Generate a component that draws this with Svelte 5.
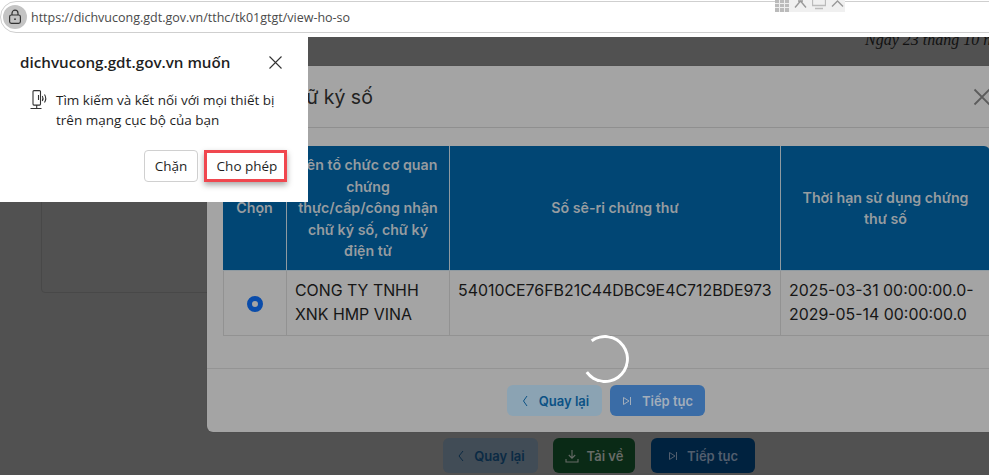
<script>
  let rows = [
    { org: ["CONG TY TNHH", "XNK HMP VINA"], serial: "54010CE76FB21C44DBC9E4C712BDE973", valid: ["2025-03-31 00:00:00.0-", "2029-05-14 00:00:00.0"] }
  ];
</script>

<div class="screen">
  <header class="browser">
    <div class="address">
      <span class="lock">
        <svg width="16" height="16" viewBox="0 0 16 16" fill="none" stroke="#333" stroke-width="1.2">
          <rect x="2.600" y="6" width="10.800" height="8.400" rx="1.800" />
          <path d="M5 6V4.200a3 3 0 0 1 6 0V6" />
          <circle cx="8" cy="10.200" r="0.900" fill="#333" stroke="none" />
        </svg>
      </span>
      <span class="url">https://dichvucong.gdt.gov.vn/tthc/tk01gtgt/view-ho-so</span>
    </div>
    <div class="tray">
      <svg width="14" height="12" viewBox="0 0 14 12"><path d="M0 0h14v12H0z" fill="#bbb" /><path d="M0 3.500h14M0 7.500h14M4.500 0v12M9.500 0v12" stroke="#eee" /></svg>
      <svg width="13" height="8" viewBox="0 0 13 8" fill="none" stroke="#999" stroke-width="1.400"><path d="M1 7.500 6.500 1l5.500 6.500M4 1h5" /></svg>
      <svg width="14" height="10" viewBox="0 0 14 10" fill="none" stroke="#bbb" stroke-width="1.300"><path d="M0.500 0v5.500h13V0M3 8.500h8" /></svg>
      <svg width="13" height="7" viewBox="0 0 13 7" fill="none" stroke="#999" stroke-width="1.400"><path d="M1 6.500 6.500 1l5.500 5.500" /></svg>
    </div>
  </header>

  <main class="page">
    <p class="date">Ngày 23 tháng 10 năm 2025</p>
    <div class="ghost-card"></div>
    <div class="page-actions">
      <button class="pbtn back"><svg width="10" height="12" viewBox="0 0 10 12" fill="none" stroke="currentColor"><path d="M7 1 3 6l4 5" /></svg>Quay lại</button>
      <button class="pbtn save">
        <svg width="14" height="14" viewBox="0 0 14 14" fill="none" stroke="currentColor" stroke-width="1.100"><path d="M7 1v8M3.800 6 7 9.200 10.200 6M1 10v3h12v-3" /></svg>
        Tải về
      </button>
      <button class="pbtn next"><svg width="11" height="10" viewBox="0 0 11 10" fill="none" stroke="currentColor"><path d="M1.500 1.500v7L7 5zM8.500 1v8" /></svg>Tiếp tục</button>
    </div>
  </main>

  <section class="modal">
    <div class="modal-head">
      <h2>Chọn chữ ký số</h2>
      <svg class="modal-x" width="18" height="18" viewBox="0 0 18 18" stroke="#5c5c5c" stroke-width="1.800"><path d="M1.500 1.500l15 15M16.500 1.500l-15 15" /></svg>
    </div>
    <div class="modal-body">
      <table>
        <thead>
          <tr>
            <th class="c1">Chọn</th>
            <th class="c2">Tên tổ chức cơ quan<br />chứng<br />thực/cấp/công nhận<br />chữ ký số, chữ ký<br />điện tử</th>
            <th class="c3">Số sê-ri chứng thư</th>
            <th class="c4">Thời hạn sử dụng chứng thư số</th>
          </tr>
        </thead>
        <tbody>
          {#each rows as row}
            <tr>
              <td class="radio-cell"><span class="radio"></span></td>
              <td>{row.org[0]}<br />{row.org[1]}</td>
              <td class="serial">{row.serial}</td>
              <td>{row.valid[0]}<br />{row.valid[1]}</td>
            </tr>
          {/each}
        </tbody>
      </table>
    </div>
    <div class="modal-foot">
      <button class="mbtn light"><svg width="10" height="12" viewBox="0 0 10 12" fill="none" stroke="currentColor"><path d="M7 1 3.500 6 7 11" /></svg>Quay lại</button>
      <button class="mbtn blue"><svg width="11" height="10" viewBox="0 0 11 10" fill="none" stroke="currentColor"><path d="M1.500 1.500v7L7 5zM8.500 1v8" /></svg>Tiếp tục</button>
    </div>
  </section>

  <div class="spinner"></div>

  <aside class="prompt">
    <div class="prompt-title">
      <strong>dichvucong.gdt.gov.vn muốn</strong>
      <svg width="13" height="13" viewBox="0 0 13 13" stroke="#333" stroke-width="1.100"><path d="M.5.5l12 12M12.500.5l-12 12" /></svg>
    </div>
    <div class="prompt-line">
      <svg width="18" height="20" viewBox="0 0 18 20" fill="none" stroke="#333" stroke-width="1.100">
        <rect x="3" y="0.600" width="7.500" height="14.500" rx="1" />
        <path d="M0.500 18.500h11M6.700 15.100v3.400M8.500 5v5" />
        <path d="M12.300 6q1.500 2.500 0 5M14.500 4.500q2.500 4 0 8" />
      </svg>
      <span>Tìm kiếm và kết nối với mọi thiết bị<br />trên mạng cục bộ của bạn</span>
    </div>
    <div class="prompt-actions">
      <button class="deny">Chặn</button>
      <button class="allow">Cho phép</button>
    </div>
  </aside>
</div>

<style>
  :global(body) {
    margin: 0;
    background: #515151;
  }

  .screen {
    position: relative;
    width: 989px;
    height: 475px;
    overflow: hidden;
    display: flex;
    flex-direction: column;
    font-family: Inter, "Liberation Sans", sans-serif;
    background: #515151;
  }

  button {
    font-family: inherit;
    border: none;
  }

  .browser {
    position: relative;
    height: 37px;
    box-sizing: border-box;
    flex: none;
    background: #fff;
    padding-top: 1px;
    overflow: hidden;
  }

  .address {
    display: flex;
    align-items: center;
    gap: 4px;
    height: 32px;
    width: 1010px;
    box-sizing: border-box;
    border: 1px solid #cfcfcf;
    border-radius: 16px;
    padding-left: 2px;
  }

  .lock {
    width: 24px;
    height: 24px;
    border-radius: 50%;
    background: #c4c4c4;
    display: flex;
    align-items: center;
    justify-content: center;
  }

  .url {
    font: 12.500px "Open Sans", sans-serif;
    color: #4a4a4a;
  }

  .tray {
    position: absolute;
    top: 0;
    left: 775px;
    width: 70px;
    height: 12px;
    overflow: hidden;
    background: #f0f0f0;
    display: flex;
    align-items: flex-start;
    gap: 5px;
  }

  .page {
    position: relative;
    flex: 1;
    overflow: hidden;
    background: #515151;
  }

  .date {
    margin: 0;
    position: absolute;
    top: -6px;
    left: 865px;
    white-space: nowrap;
    font: italic 16px "Liberation Serif", serif;
    color: #111;
  }

  .ghost-card {
    position: absolute;
    left: 41px;
    top: -20px;
    width: 960px;
    height: 276px;
    border: 1px solid #484848;
    border-radius: 4px;
    box-sizing: border-box;
  }

  .page-actions {
    position: absolute;
    left: 443px;
    top: 401px;
    display: flex;
    gap: 15px;
  }

  .pbtn {
    height: 35px;
    border-radius: 6px;
    display: flex;
    align-items: center;
    justify-content: center;
    gap: 8px;
    font-size: 13px;
    font-weight: 600;
    box-sizing: border-box;
  }

  .pbtn.back { width: 95px; background: #414c56; color: #0b2a44; }
  .pbtn.save { width: 82px; background: #0a2a16; color: #666b67; }
  .pbtn.next { width: 104px; background: #00223f; color: #525e6e; margin-left: 1px; }

  .modal {
    position: absolute;
    left: 207px;
    top: 66px;
    width: 800px;
    height: 366px;
    display: flex;
    flex-direction: column;
    background: #a4a4a4;
    border-radius: 6px;
    box-shadow: 0 0 1px #444;
  }

  .modal-head {
    height: 62px;
    flex: none;
    box-sizing: border-box;
    border-bottom: 1px solid #8f8f8f;
    display: flex;
    align-items: center;
    padding-left: 22px;
    position: relative;
  }

  .modal-head h2 {
    margin: 0;
    font-size: 19.500px;
    font-weight: 400;
    color: #222;
  }

  .modal-x {
    position: absolute;
    left: 766px;
    top: 22px;
  }

  .modal-body {
    flex: 1;
    padding: 18px 0 0 16px;
  }

  table {
    width: 767px;
    table-layout: fixed;
    border-collapse: separate;
    border-spacing: 0;
    font-size: 15.900px;
    color: #161616;
  }

  th {
    height: 125px;
    box-sizing: border-box;
    padding: 0 8px;
    background: #014674;
    color: #969ca0;
    font-size: 14.200px;
    line-height: 21.500px;
    font-weight: 600;
    border-right: 1px solid #8f9aa1;
    border-bottom: 1px solid #8f9aa1;
  }

  th:first-child { border-top-left-radius: 6px; }
  th:last-child { border-top-right-radius: 6px; border-right: none; }

  .c1 { width: 64px; padding: 0; }
  .c2 { width: 163px; padding: 0; }
  .c3 { width: 331px; }
  .c4 { padding: 0 16px; }

  td {
    height: 65px;
    box-sizing: border-box;
    padding: 0 8px;
    line-height: 24px;
    border-right: 1px solid #929292;
    border-bottom: 1px solid #929292;
    white-space: nowrap;
  }

  td:first-child { border-left: 1px solid #929292; }
  td:last-child { border-right: none; }
  td.serial { vertical-align: top; padding-top: 8px; }
  td.radio-cell { text-align: center; padding: 0; }

  .radio {
    display: inline-block;
    width: 16px;
    height: 16px;
    box-sizing: border-box;
    border: 5px solid #0a4caa;
    border-radius: 50%;
    background: #a4a4a4;
    vertical-align: middle;
  }

  .modal-foot {
    height: 64px;
    flex: none;
    box-sizing: border-box;
    border-top: 1px solid #949494;
    padding: 16px 0 0 300px;
    display: flex;
    gap: 8px;
  }

  .mbtn {
    width: 95px;
    height: 31px;
    border-radius: 6px;
    display: flex;
    align-items: center;
    justify-content: center;
    gap: 9px;
    font-size: 13px;
    font-weight: 600;
  }

  .mbtn.light { background: #8ba3b3; color: #0c5285; }
  .mbtn.blue { background: #3a6ca6; color: #a3aebb; }

  .spinner {
    position: absolute;
    left: 581px;
    top: 335px;
    width: 48px;
    height: 48px;
    box-sizing: border-box;
    border: 3.500px solid #fff;
    border-left-color: transparent;
    border-radius: 50%;
    transform: rotate(9deg);
  }

  .prompt {
    position: absolute;
    left: 0;
    top: 33px;
    width: 308px;
    height: 169px;
    box-sizing: border-box;
    background: #fff;
    padding: 18px 0 0 20px;
    font-family: "Open Sans", sans-serif;
    color: #1f1f1f;
  }

  .prompt-title {
    display: flex;
    align-items: center;
    justify-content: space-between;
    width: 262px;
    height: 22px;
    font-size: 15.200px;
  }

  .prompt-title strong { font-weight: 600; }

  .prompt-line {
    display: flex;
    gap: 8px;
    margin: 17px 0 0 10px;
    font-size: 13.500px;
    line-height: 20px;
  }

  .prompt-line svg { flex: none; }

  .prompt-actions {
    display: flex;
    align-items: center;
    gap: 9px;
    margin: 20px 0 0 124px;
  }

  .prompt-actions button {
    background: #fff;
    font: 13.500px "Open Sans", sans-serif;
    color: #1f1f1f;
    padding: 0;
  }

  .prompt-actions .deny {
    width: 54px;
    height: 32px;
    border: 1px solid #d0d0d0;
    border-radius: 4px;
  }

  .prompt-actions .allow {
    width: 77px;
    height: 26px;
    padding-left: 3px;
    outline: 3px solid #f0474f;
    box-shadow: 0 3px 6px 3px rgba(0, 0, 0, 0.35);
  }
</style>
